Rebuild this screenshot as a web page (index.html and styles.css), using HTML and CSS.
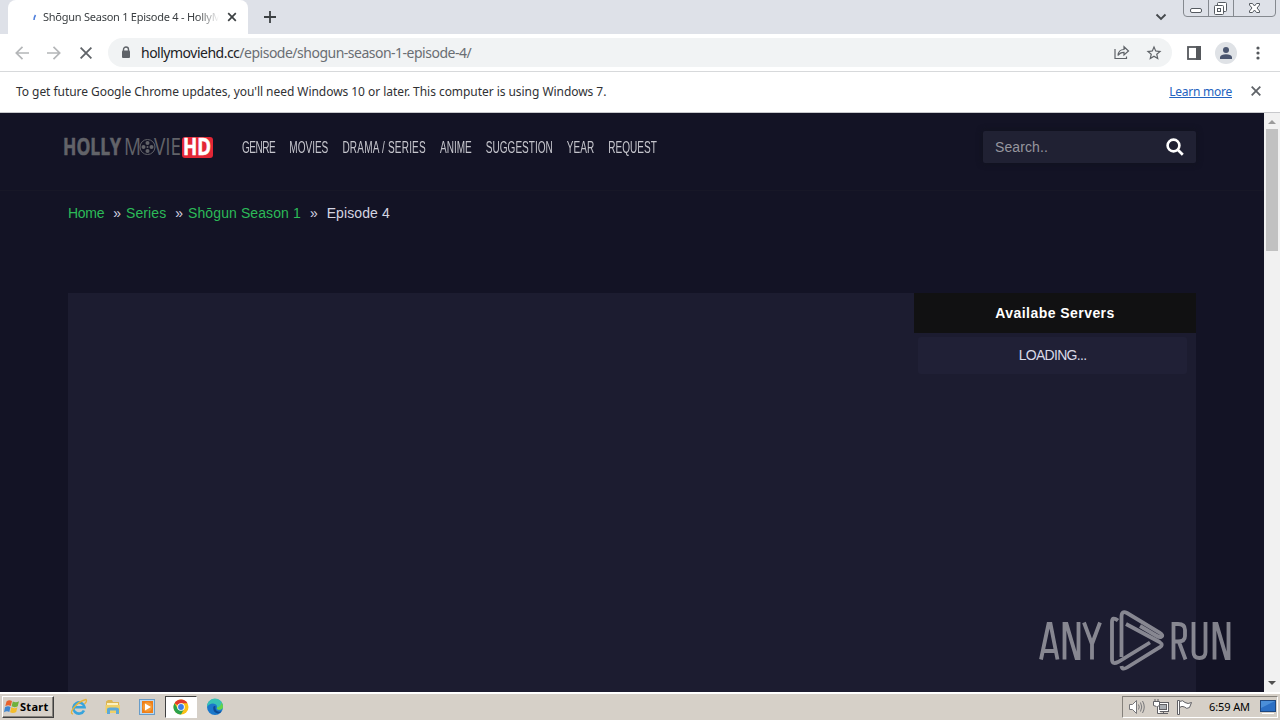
FILE: index.html
```html
<!DOCTYPE html>
<html lang="en">
<head>
  <meta charset="UTF-8">
  <meta name="viewport" content="width=device-width, initial-scale=1.0">
  <title>Shōgun Season 1 Episode 4 - HollyMovieHD</title>
  <link rel="stylesheet" href="styles.css">
</head>
<body>
  <div class="screen">
    <div class="tabstrip">
      <div class="prev-tab"></div>
      <div class="tab">
        <svg class="spinner" width="4" height="7" viewBox="0 0 4 7"><path d="M1 6Q1.200 3 2.500 1" stroke="#4f7fdc" stroke-width="1.600" fill="none"/></svg>
        <span class="tab-title">Shōgun Season 1 Episode 4 - HollyM</span>
        <svg class="tab-close" width="10" height="10" viewBox="0 0 10 10"><path d="M1.200 1.200 8.800 8.800M8.800 1.200 1.200 8.800" stroke="#3c4043" stroke-width="1.700"/></svg>
      </div>
      <svg class="new-tab" width="12" height="12" viewBox="0 0 12 12"><path d="M6 0V12M0 6H12" stroke="#3c4043" stroke-width="1.800"/></svg>
      <svg class="tab-search" width="12" height="8" viewBox="0 0 12 8"><path d="M1.500 1.500 6 6 10.500 1.500" stroke="#45494d" stroke-width="1.900" fill="none"/></svg>
      <svg class="win-buttons" width="94" height="18" viewBox="0 0 94 18" fill="none">
        <path d="M.5 0V13Q.5 16.500 4 16.500H89Q92.500 16.500 92.500 13V0M25.500 0V16M50.500 0V16" stroke="#85898f"/>
        <rect x="7.500" y="8.500" width="11" height="4" rx="1.500" fill="#fff" stroke="#555a60"/>
        <rect x="34.500" y="2.500" width="9" height="9" rx="1" fill="#fff" stroke="#555a60"/>
        <rect x="31.500" y="5.500" width="9" height="9" rx="1" fill="#fff" stroke="#555a60"/>
        <rect x="34.500" y="8.500" width="3" height="3" stroke="#555a60"/>
        <path d="M66.500 3.500H69.500L71.500 6 73.500 3.500H76.500V5L74 8 76.500 11V12.500H73.500L71.500 10 69.500 12.500H66.500V11L69 8 66.500 5Z" fill="#fff" stroke="#555a60"/>
      </svg>
    </div>

    <div class="toolbar">
      <svg class="nav-back" width="14" height="14" viewBox="0 0 14 14"><path d="M14 7H1.500M7.500 .8 1.300 7 7.500 13.200" stroke="#b4b6b8" stroke-width="1.700" fill="none"/></svg>
      <svg class="nav-forward" width="14" height="14" viewBox="0 0 14 14"><path d="M0 7H12.500M6.500 .8 12.700 7 6.500 13.200" stroke="#b4b6b8" stroke-width="1.700" fill="none"/></svg>
      <svg class="nav-stop" width="12" height="12" viewBox="0 0 12 12"><path d="M.6 .6 11.400 11.400M11.400 .6 .6 11.400" stroke="#5f6368" stroke-width="1.800"/></svg>
      <div class="omnibox">
        <svg width="10" height="13" viewBox="0 0 10 13"><path d="M2.500 5V3.500a2.500 2.500 0 0 1 5 0V5" stroke="#5f6368" stroke-width="1.400" fill="none"/><rect x="1" y="4.500" width="8" height="7.500" rx="1" fill="#5f6368"/></svg>
        <span class="url">hollymoviehd.cc<i>/episode/shogun-season-1-episode-4/</i></span>
        <svg class="share" width="16" height="15" viewBox="0 0 16 15" fill="none" stroke="#5f6368" stroke-width="1.200"><path d="M1 4V13.500H12.500V11.500"/><path d="M4 10.500Q4.500 4.500 10 4.500V1.700L14.500 6 10 10V7.300Q6 7.300 4 10.500Z"/></svg>
        <svg class="star" width="18" height="18" viewBox="0 0 24 24"><path fill="#5f6368" d="M22 9.240l-7.190-.62L12 2 9.190 8.630 2 9.240l5.460 4.730L5.820 21 12 17.270 18.180 21l-1.630-7.030L22 9.240zM12 15.400l-3.760 2.270 1-4.280-3.320-2.880 4.380-.38L12 6.100l1.710 4.040 4.380.38-3.320 2.880 1 4.280L12 15.400z"/></svg>
      </div>
      <svg class="side-panel" width="14" height="14" viewBox="0 0 14 14"><rect x="1" y="1" width="12" height="12" fill="none" stroke="#55585c" stroke-width="1.800"/><rect x="9" y="0" width="5" height="14" fill="#55585c"/></svg>
      <div class="avatar">
        <svg width="14" height="14" viewBox="0 0 14 14" fill="#4b5670"><circle cx="7" cy="4" r="3"/><path d="M1 13V11Q2 8.300 7 8.300T13 11V13Z"/></svg>
      </div>
      <svg class="menu-dots" width="4" height="14" viewBox="0 0 4 14" fill="#55585c"><circle cx="2" cy="2" r="1.600"/><circle cx="2" cy="7" r="1.600"/><circle cx="2" cy="12" r="1.600"/></svg>
    </div>

    <div class="infobar">
      <span class="info-text">To get future Google Chrome updates, you'll need Windows 10 or later. This computer is using Windows 7.</span>
      <a class="learn-more">Learn more</a>
      <svg width="10" height="10" viewBox="0 0 10 10"><path d="M.7 .7 9.300 9.300M9.300 .7 .7 9.300" stroke="#5f6368" stroke-width="1.800"/></svg>
    </div>

    <div class="viewport">
      <div class="page">
        <header class="header">
          <svg class="logo" width="152" height="24" viewBox="0 0 152 24">
            <g fill="#626369" font-family="Open Sans, sans-serif">
              <text x="0" y="19" font-size="23" font-weight="700" textLength="58" lengthAdjust="spacingAndGlyphs" stroke="#626369" stroke-width=".6">HOLLY</text>
              <text x="61" y="19" font-size="23" font-weight="400" textLength="17" lengthAdjust="spacingAndGlyphs">M</text>
              <text x="91" y="19" font-size="23" font-weight="400" textLength="27" lengthAdjust="spacingAndGlyphs">VIE</text>
            </g>
            <g fill="none" stroke="#626369"><circle cx="84.500" cy="11" r="7.500"/></g>
            <g fill="#626369"><circle cx="84.500" cy="7" r="2"/><circle cx="84.500" cy="15" r="2"/><circle cx="80.500" cy="11" r="2"/><circle cx="88.500" cy="11" r="2"/><circle cx="84.500" cy="11" r="1"/></g>
            <rect x="119" y="1" width="31" height="21" rx="3" fill="#e32636"/>
            <text x="120" y="19" font-size="23" font-weight="700" font-family="Open Sans, sans-serif" fill="#fff" stroke="#fff" stroke-width=".6" textLength="28" lengthAdjust="spacingAndGlyphs">HD</text>
          </svg>
          <nav class="main-nav">
            <a class="narrow">GENRE</a>
            <a>MOVIES</a>
            <a class="wide">DRAMA / SERIES</a>
            <a>ANIME</a>
            <a>SUGGESTION</a>
            <a>YEAR</a>
            <a>REQUEST</a>
          </nav>
          <div class="search">
            <span>Search..</span>
            <svg width="18" height="18" viewBox="0 0 18 18" fill="none" stroke="#fff"><circle cx="7.500" cy="7.500" r="5.900" stroke-width="2.600"/><path d="M11.500 11.500 16.800 16.800" stroke-width="2.700"/></svg>
          </div>
        </header>

        <div class="breadcrumb">
          <a class="crumb-home">Home</a><span>»</span><a class="crumb-series">Series</a><span>»</span><a class="crumb-season">Shōgun Season 1</a><span>»</span><b>Episode 4</b>
        </div>

        <div class="player">
          <div class="servers">
            <div class="servers-title">Availabe Servers</div>
            <div class="servers-loading">LOADING...</div>
          </div>
        </div>
      </div>

      <div class="scrollbar">
        <svg width="8" height="4" viewBox="0 0 8 4"><path d="M0 4 4 0 8 4Z" fill="#9b9b9b"/></svg>
        <div class="thumb"></div>
        <svg class="arrow-down" width="8" height="4" viewBox="0 0 8 4"><path d="M0 0H8L4 4Z" fill="#505050"/></svg>
      </div>
    </div>

    <div class="taskbar">
      <div class="start">
        <svg width="16" height="16" viewBox="0 0 16 16">
          <path d="M2.500 2.500Q5 .5 8 2L6.800 7Q4 5.500 1.300 7.300Z" fill="#e8622c"/>
          <path d="M8.800 2.500Q12 4 15 2.300L13.700 7.200Q10.500 9 7.600 7.300Z" fill="#70b13b"/>
          <path d="M1 8.200Q4 6.600 6.500 8L5.300 13Q3 11.500 0 13.200Z" fill="#3f86d0"/>
          <path d="M7.300 8.300Q10.500 10 13.400 8.200L12.200 13Q9 15 6.100 13.300Z" fill="#f4bd2c"/>
        </svg>
        <span>Start</span>
      </div>
      <div class="quick">
        <svg width="18" height="18" viewBox="0 0 18 18" fill="none"><path d="M14 12.500A5.600 5.600 0 1 1 14.500 9.200H4.500" stroke="#38a4dc" stroke-width="2.600"/><path d="M3 16Q-.5 15.500 4 9.500T16 1.500Q17.500 3 14.500 6" stroke="#e6b43a" stroke-width="1.300"/></svg>
      </div>
      <div class="quick">
        <svg width="18" height="18" viewBox="0 0 18 18"><path d="M2 3.500 4 2H8L9 4H15V15H2Z" fill="#dcb552"/><path d="M3 5H14V10H3Z" fill="#fbf1c0"/><path d="M1.500 7H16V15H1.500Z" fill="#f0d067"/><path d="M3 16V11.500Q3 9.500 6 9.500H12Q15 9.500 15 11.500V16H12V12.500H6V16Z" fill="#5da9d8"/></svg>
      </div>
      <div class="quick">
        <svg width="18" height="18" viewBox="0 0 18 18"><rect x="1.500" y="1.500" width="15" height="15" fill="#b9d8f1" stroke="#689cc8"/><rect x="4" y="3" width="11" height="12" fill="#ee7f19"/><circle cx="9.500" cy="9" r="4.800" fill="#f59a35"/><path d="M7 5.500 13 9 7 12.500Z" fill="#fff"/></svg>
      </div>
      <div class="quick active">
        <svg width="16" height="16" viewBox="0 0 16 16"><circle cx="8" cy="8" r="7.500" fill="#fbc116"/><path d="M8 8 1.500 4.250A7.500 7.500 0 0 1 14.500 4.250H8Z" fill="#e33b2e"/><path d="M1.500 4.250A7.500 7.500 0 0 0 8 15.500L11.200 9.800 8 8 4.800 9.800Z" fill="#2ba24c"/><circle cx="8" cy="8" r="3.800" fill="#fff"/><circle cx="8" cy="8" r="2.900" fill="#3e7de8"/></svg>
      </div>
      <div class="quick">
        <svg width="18" height="18" viewBox="0 0 18 18"><circle cx="9" cy="9" r="8" fill="#1b78cb"/><path d="M1 9A8 8 0 0 1 17 8Q17.500 11.500 13 11.800 10 11.500 11 9.500 11.500 6 7 5.500 3 5.500 1 9Z" fill="#37c2b5"/><path d="M7.300 9Q6.500 14 11.500 15.500 14 15.500 15.800 13.200 12 14.500 10 12.200 8.800 10.700 9.500 8.300 8 7.700 7.300 9Z" fill="#0d4b94"/><path d="M11 9.500Q10.300 11.500 13 11.800 17.500 11.500 17 8 16.500 6 15.500 4.500 14.500 9 11 9.500Z" fill="#64d34b"/></svg>
      </div>
      <div class="tray">
        <svg width="18" height="16" viewBox="0 0 18 16" fill="none" stroke="#77777a"><path d="M1.500 5.500H4.500L8.500 1.500V14.500L4.500 10.500H1.500Z" fill="#fff"/><path d="M10.500 5.500Q12 8 10.500 10.500M12.500 3.500Q15 8 12.500 12.500M14.500 2Q18 8 14.500 14"/></svg>
        <svg class="tray-net" width="17" height="16" viewBox="0 0 17 16" fill="none" stroke="#606064"><rect x="4.500" y="3.500" width="11" height="9" fill="#fff"/><rect x="6.500" y="5.500" width="7" height="5" fill="#a9adb2"/><path d="M10.500 12V14M6 14.500H15"/><path d="M.5 2.500H6.500V6.500L4.500 7.500V14.500H8M3.500 7.500 .5 6.500V2.500M2 0V2M5 0V2" fill="#fff"/></svg>
        <svg class="tray-flag" width="17" height="16" viewBox="0 0 17 16" stroke="#606064" fill="#fff"><path d="M1.500 1.500H3.500V15.500H1.500Z"/><path d="M3.500 2.500Q7 .5 9 3.500 12 5.500 15.500 3.500L13.500 8.500Q10.500 10.500 8.500 8 6 6.500 3.500 8.500Z"/></svg>
        <span class="clock">6:59 AM</span>
        <svg width="16" height="14" viewBox="0 0 16 14"><rect x=".5" y=".5" width="15" height="11" fill="#2b6fc4" stroke="#1e477f"/><path d="M1 1H15L1 8Z" fill="#4b8fd8"/><path d="M2 13.500H14" stroke="#fff"/></svg>
      </div>
    </div>

    <svg class="watermark" width="196" height="64" viewBox="0 0 196 64" fill="none" stroke="#fff" stroke-width="3.800">
      <path d="M2 50.500 9.500 15H11.500L18.500 50.500M5 42H16.500"/>
      <path d="M25.500 50.500V15H27.500L37.500 49H39.500V13"/>
      <path d="M45 13.500 53 35V50.500M61 13.500 53 35"/>
      <path d="M79 11.500Q73 7 73 13V50Q73 56 79 53L111 33.500"/>
      <path d="M82.500 48V8Q82.500 1 88 4L120.500 23.500Q125 26.500 122 28Q120.500 28.500 117 26.500L101 17"/>
      <path d="M87 15 120.500 33Q125 36 120.500 38.500L88 58.500Q83 61.500 82.500 57"/>
      <path d="M134.500 50.500V15H139Q146 15 146 21V27Q146 32.500 139 32.500H134.500M140 33 146.500 50.500"/>
      <path d="M154.500 13V43Q154.500 49 160.500 49T166.500 43V13"/>
      <path d="M175.500 50.500V15H177.500L187.500 49H189.500V13"/>
    </svg>
  </div>
</body>
</html>
```
FILE: styles.css
```css
* { box-sizing: border-box; }
body {
  margin: 0;
  overflow: hidden;
  font-family: "Liberation Sans", Arial, sans-serif;
}
svg {
  display: block;
  flex: none;
}
.screen {
  position: relative;
  width: 1280px;
  height: 720px;
  display: flex;
  flex-direction: column;
}

/* browser chrome */
.tabstrip {
  height: 34px;
  display: flex;
  background: #dee1e8;
  font-family: "Noto Sans", Tahoma, sans-serif;
}
.prev-tab {
  width: 8px;
  background: #dee1e8;
}
.tab {
  width: 240px;
  display: flex;
  align-items: center;
  background: #fff;
  border-radius: 8px 8px 0 0;
  padding-left: 25px;
}
.spinner { margin-top: 1px; }
.tab-title {
  width: 176px;
  margin: -2px 0 0 6px;
  white-space: nowrap;
  font-size: 11px;
  letter-spacing: -.25px;
  color: #3c4043;
  -webkit-mask-image: linear-gradient(to right, #000 155px, transparent);
  mask-image: linear-gradient(to right, #000 155px, transparent);
}
.tab-close { margin-left: 8px; }
.new-tab { margin: 11px 0 0 16px; }
.tab-search { margin: 13px 0 0 auto; }
.win-buttons { margin: 0 3px 0 16px; }
.toolbar {
  height: 38px;
  display: flex;
  align-items: center;
  background: #fff;
  border-bottom: 1px solid #d7d9db;
}
.nav-back { margin-left: 15px; }
.nav-forward { margin-left: 18px; }
.nav-stop { margin-left: 19px; }
.omnibox {
  width: 1064px;
  height: 29px;
  margin-left: 16px;
  padding-left: 13px;
  display: flex;
  align-items: center;
  border-radius: 15px;
  background: #f1f3f4;
}
.url {
  margin-left: 10px;
  font-family: "Noto Sans", Tahoma, sans-serif;
  font-size: 14px;
  letter-spacing: -.5px;
  color: #202124;
}
.url i {
  font-style: normal;
  color: #6a6e73;
}
.share { margin-left: auto; }
.star { margin: 0 9px 0 15px; }
.side-panel { margin-left: 15px; }
.avatar {
  width: 22px;
  height: 22px;
  margin-left: 14px;
  display: flex;
  align-items: center;
  justify-content: center;
  border-radius: 50%;
  background: #dfe2e6;
}
.menu-dots { margin-left: 19px; }
.infobar {
  height: 41px;
  padding: 0 19px 2px 16px;
  display: flex;
  align-items: center;
  background: #fff;
  border-bottom: 1px solid #c8c9cc;
  font-family: "Noto Sans", Tahoma, sans-serif;
  font-size: 12px;
  letter-spacing: -.05px;
  color: #303134;
  white-space: nowrap;
}
.learn-more {
  margin: 0 19px 0 auto;
  letter-spacing: -.25px;
  color: #2363c0;
  text-decoration: underline;
}

/* page */
.viewport {
  height: 579px;
  display: flex;
}
.page {
  width: 1264px;
  background: #131325;
}
.header {
  height: 78px;
  padding-left: 63px;
  display: flex;
  border-bottom: 1px solid #171727;
}
.logo {
  margin-top: 23px;
  overflow: visible;
}
.main-nav {
  width: 640px;
  display: flex;
  gap: 22.5px;
  margin: 25px 0 0 27px;
  font-size: 16px;
  line-height: 20px;
  color: #c5c5cc;
  white-space: nowrap;
  transform: scaleX(.627);
  transform-origin: left;
}
.main-nav .narrow { letter-spacing: -.8px; }
.main-nav .wide { letter-spacing: .3px; }
.search {
  width: 213px;
  height: 32px;
  margin: 18px 68px 0 auto;
  padding: 0 12px;
  display: flex;
  align-items: center;
  justify-content: space-between;
  border-radius: 2px;
  background: #202133;
  box-shadow: 0 0 6px #11131c;
  font-size: 14px;
  letter-spacing: .1px;
  color: #96969e;
}
.breadcrumb {
  height: 102px;
  padding: 14px 68px 0;
  display: flex;
  font-size: 14px;
  line-height: 17px;
  color: #d5d5e2;
}
.breadcrumb a { color: #2cba58; }
.breadcrumb b {
  margin-left: 4px;
  font-weight: normal;
  letter-spacing: .1px;
}
.breadcrumb span { margin: 0 5px 0 9px; }
.crumb-home { letter-spacing: -.3px; }
.crumb-series { letter-spacing: .1px; }
.crumb-season { letter-spacing: .1px; }
.player {
  width: 1128px;
  height: 399px;
  margin-left: 68px;
  display: flex;
  justify-content: flex-end;
  background: #1c1c30;
}
.servers {
  width: 282px;
  text-align: center;
}
.servers-title {
  height: 40px;
  background: #111112;
  color: #fff;
  font-size: 14px;
  font-weight: bold;
  letter-spacing: .45px;
  line-height: 40px;
}
.servers-loading {
  width: 269px;
  height: 37px;
  margin: 4px 0 0 4px;
  border-radius: 3px;
  background: #202036;
  color: #d9d9e6;
  font-size: 14px;
  letter-spacing: -.7px;
  line-height: 37px;
}
.scrollbar {
  width: 16px;
  padding-top: 7px;
  display: flex;
  flex-direction: column;
  align-items: center;
  background: #f1f1f1;
}
.thumb {
  width: 12px;
  height: 122px;
  margin-top: 5px;
  background: #c1c1c1;
}
.arrow-down { margin: auto 0 7px; }

/* taskbar */
.taskbar {
  height: 28px;
  padding: 4px 2px 2px 2px;
  display: flex;
  background: #d6d0c8;
  box-shadow: inset 0 2px #fff;
  font-family: "Noto Sans", Tahoma, sans-serif;
  font-size: 11px;
  color: #000;
}
.start {
  width: 52px;
  height: 22px;
  display: flex;
  align-items: center;
  padding-left: 1px;
  border: 1px solid;
  border-color: #fff #404040 #404040 #fff;
  box-shadow: inset -1px -1px #86827c;
  font-weight: bold;
}
.start span {
  margin-top: -2px;
  letter-spacing: .3px;
}
.quick {
  width: 32px;
  height: 22px;
  margin-left: 2px;
  display: flex;
  align-items: center;
  justify-content: center;
}
.start + .quick { margin-left: 9px; }
.quick.active {
  border: 1px solid;
  border-color: #404040 #fff #fff #404040;
  background: #fff;
}
.tray {
  width: 156px;
  height: 22px;
  margin-left: auto;
  padding-left: 5px;
  display: flex;
  align-items: center;
  border: 1px solid;
  border-color: #85817b #fff #fff #85817b;
}
.tray-net { margin-left: 7px; }
.tray-flag { margin-left: 6px; }
.clock {
  width: 43px;
  margin: -1px 8px 0 16px;
  letter-spacing: -.1px;
  white-space: nowrap;
}
.watermark {
  position: absolute;
  left: 1039px;
  top: 609px;
  opacity: .47;
}
```
